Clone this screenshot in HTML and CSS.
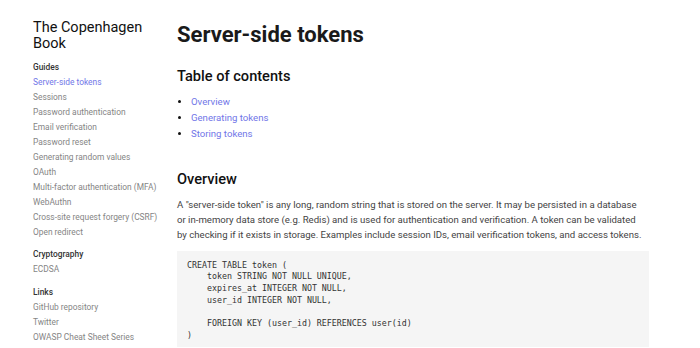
FILE: index.html
```html
<!DOCTYPE html>
<html lang="en">
<head>
<meta charset="utf-8">
<title>Server-side tokens - The Copenhagen Book</title>
<link rel="stylesheet" href="styles.css">
</head>
<body>
<div class="layout">
  <nav class="sidebar">
    <div class="brand">The Copenhagen Book</div>
    <div class="group">
      <div class="group-title">Guides</div>
      <a class="nav-link active" href="#">Server-side tokens</a>
      <a class="nav-link" href="#">Sessions</a>
      <a class="nav-link" href="#">Password authentication</a>
      <a class="nav-link" href="#">Email verification</a>
      <a class="nav-link" href="#">Password reset</a>
      <a class="nav-link" href="#">Generating random values</a>
      <a class="nav-link" href="#">OAuth</a>
      <a class="nav-link" href="#">Multi-factor authentication (MFA)</a>
      <a class="nav-link" href="#">WebAuthn</a>
      <a class="nav-link" href="#">Cross-site request forgery (CSRF)</a>
      <a class="nav-link" href="#">Open redirect</a>
    </div>
    <div class="group">
      <div class="group-title">Cryptography</div>
      <a class="nav-link" href="#">ECDSA</a>
    </div>
    <div class="group">
      <div class="group-title">Links</div>
      <a class="nav-link" href="#">GitHub repository</a>
      <a class="nav-link" href="#">Twitter</a>
      <a class="nav-link" href="#">OWASP Cheat Sheet Series</a>
    </div>
  </nav>
  <main class="content">
    <h1 class="title">Server-side tokens</h1>
    <h2 class="section-title">Table of contents</h2>
    <ul class="toc">
      <li><a href="#">Overview</a></li>
      <li><a href="#">Generating tokens</a></li>
      <li><a href="#">Storing tokens</a></li>
    </ul>
    <h2 class="section-title overview">Overview</h2>
    <p class="para">A "server-side token" is any long, random string that is stored on the server. It may be persisted in a database or in-memory data store (e.g. Redis) and is used for authentication and verification. A token can be validated by checking if it exists in storage. Examples include session IDs, email verification tokens, and access tokens.</p>
    <pre class="code">CREATE TABLE token (
    token STRING NOT NULL UNIQUE,
    expires_at INTEGER NOT NULL,
    user_id INTEGER NOT NULL,

    FOREIGN KEY (user_id) REFERENCES user(id)
)</pre>
  </main>
</div>
</body>
</html>
```

FILE: styles.css
```css
html, body {
  margin: 0;
  padding: 0;
  background: #ffffff;
}
body {
  font-family: Roboto, "Liberation Sans", sans-serif;
  color: #1f1f1f;
  overflow: hidden;
  height: 348px;
}
.layout {
  display: flex;
}
.sidebar {
  width: 144px;
  flex: none;
  padding: 20px 0 0 33px;
  display: flex;
  flex-direction: column;
  gap: 7.5px;
}
.brand {
  font-size: 14.5px;
  line-height: 16px;
  color: #111;
  width: 120px;
}
.group {
  display: flex;
  flex-direction: column;
}
.group-title {
  font-size: 8.4px;
  line-height: 15px;
  font-weight: 500;
  color: #333;
}
.nav-link {
  font-size: 8.4px;
  line-height: 15px;
  color: #858585;
  text-decoration: none;
  white-space: nowrap;
}
.nav-link.active {
  color: #7176e8;
}
.content {
  flex: 1;
  padding: 22px 0 0 0;
  width: 472px;
  max-width: 472px;
}
.title {
  margin: 0;
  font-size: 22px;
  line-height: 26px;
  font-weight: 700;
  color: #1a1a1a;
}
.section-title {
  margin: 19px 0 0 0;
  font-size: 14.6px;
  line-height: 18px;
  font-weight: 500;
  color: #111;
}
.section-title.overview {
  margin-top: 27.5px;
}
.toc {
  margin: 9px 0 0 0;
  padding-left: 14px;
  list-style: disc;
}
.toc li {
  font-size: 9.6px;
  line-height: 16px;
  color: #111;
}
.toc a {
  color: #7176e8;
  text-decoration: none;
}
.para {
  margin: 9px 0 0 0;
  padding-right: 6px;
  font-size: 9.6px;
  line-height: 15px;
  color: #444;
}
.code {
  margin: 9px 0 0 0;
  padding: 9px 10px 6px;
  background: #f5f5f5;
  font-family: "DejaVu Sans Mono", monospace;
  font-size: 8.3px;
  line-height: 11.7px;
  color: #333;
}
```
